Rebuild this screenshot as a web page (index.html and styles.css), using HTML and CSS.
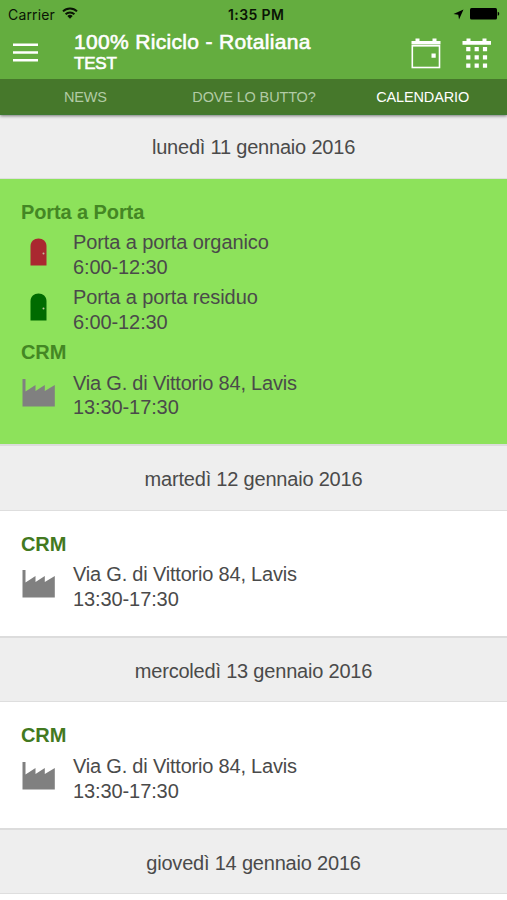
FILE: index.html
```html
<!DOCTYPE html>
<html lang="it">
<head>
<meta charset="utf-8">
<title>100% Riciclo - Rotaliana</title>
<link rel="stylesheet" href="styles.css">
</head>
<body>
<svg width="0" height="0" class="defs">
  <symbol id="factory" viewBox="0 0 33 28"><path fill="#808080" d="M.5 0h3v12.500L13.500 6v6L22.800 6v6L32.800 6v21.500H.5z"/></symbol>
  <symbol id="door" viewBox="0 0 17 28"><path fill="currentColor" d="M.5 27.500V8C.5 3.600 4 .5 8.500 .5S16.500 3.600 16.500 8v19.500z"/><circle cx="13.500" cy="15.500" r="1" fill="#c3bf9a"/></symbol>
</svg>
<header class="top">
  <div class="status">
    <span class="carrier">Carrier</span>
    <svg class="wifi" width="16" height="12" viewBox="0 0 16 12"><g fill="none" stroke="#0a1405" stroke-width="2"><path d="M1 4.400a10 10 0 0 1 14 0M3.600 7.200a6.300 6.300 0 0 1 8.800 0"/></g><path fill="#0a1405" d="M5.300 8.900a4 4 0 0 1 5.400 0L8 11.700z"/></svg>
    <span class="clock">1:35 PM</span>
    <svg class="loc" width="11" height="11" viewBox="0 0 11 11"><path d="M10.500 .5L6 10.500 5.300 5.700.5 5z"/></svg>
    <svg class="battery" width="30" height="12" viewBox="0 0 30 12"><rect width="27" height="11.500" rx="1.500"/><path d="M27.700 3.800c2 .5 2 3.500 0 4z"/></svg>
  </div>
  <div class="toolbar">
    <svg class="menu" width="25" height="19" viewBox="0 0 25 19"><path stroke="#fff" stroke-width="2.500" d="M0 1.700h25M0 9.500h25M0 17.200h25"/></svg>
    <div class="titles"><div class="title">100% Riciclo - Rotaliana</div><div class="subtitle">TEST</div></div>
    <svg class="cal" width="30" height="31" viewBox="0 0 30 31"><path fill="#fff" d="M.5 3h4V.5h4V3h13V.5h4V3h4v3.500H.5zM20.500 15.500h4.200v4.200h-4.200z"/><rect x="1.300" y="7.800" width="27.200" height="21.700" fill="none" stroke="#fff" stroke-width="1.600"/></svg>
    <svg class="grid" width="30" height="31" viewBox="0 0 30 31"><path fill="#fff" d="M.5 3h4V.5h4V3h12V.5h4V3H29v3.800H.5zM4.200 9h4.200v4.200H4.200zm8.400 0h4.200v4.200h-4.200zm8.300 0h4.200v4.200h-4.200zM4.200 17.300h4.200v4.200H4.200zm8.400 0h4.200v4.200h-4.200zm8.300 0h4.200v4.200h-4.200zM4.200 25.500h4.200v4.200H4.200zm8.400 0h4.200v4.200h-4.200zm8.300 0h4.200v4.200h-4.200z"/></svg>
  </div>
  <nav class="tabs"><span>NEWS</span><span>DOVE LO BUTTO?</span><span class="active">CALENDARIO</span></nav>
</header>
<main>
  <h2 class="day first">lunedì 11 gennaio 2016</h2>
  <section class="card today">
    <h3>Porta a Porta</h3>
    <div class="item"><svg class="icon red" width="34" height="28"><use href="#door"/></svg><p>Porta a porta organico<br>6:00-12:30</p></div>
    <div class="item"><svg class="icon green" width="34" height="28"><use href="#door"/></svg><p>Porta a porta residuo<br>6:00-12:30</p></div>
    <h3>CRM</h3>
    <div class="item site"><svg class="icon" width="34" height="28"><use href="#factory"/></svg><p><span class="place">Via G. di Vittorio 84, Lavis</span><br>13:30-17:30</p></div>
  </section>
  <h2 class="day">martedì 12 gennaio 2016</h2>
  <section class="card">
    <h3>CRM</h3>
    <div class="item site"><svg class="icon" width="34" height="28"><use href="#factory"/></svg><p><span class="place">Via G. di Vittorio 84, Lavis</span><br>13:30-17:30</p></div>
  </section>
  <h2 class="day">mercoledì 13 gennaio 2016</h2>
  <section class="card">
    <h3>CRM</h3>
    <div class="item site"><svg class="icon" width="34" height="28"><use href="#factory"/></svg><p><span class="place">Via G. di Vittorio 84, Lavis</span><br>13:30-17:30</p></div>
  </section>
  <h2 class="day">giovedì 14 gennaio 2016</h2>
</main>
</body>
</html>
```
FILE: styles.css
```css
* { box-sizing: border-box; }
html { overflow: hidden; }
body { margin: 0; height: 900px; overflow: hidden; background: #fff; color: #4a4a4a; font-family: "Liberation Sans", Arial, sans-serif; font-size: 20px; }
svg { display: block; flex: none; }
h2, h3, p { margin: 0; }
.defs { position: absolute; }
.top { position: relative; z-index: 1; height: 115px; background: #64ad3f; box-shadow: 0 1px 3px rgba(0,0,0,.5); }
.status { display: grid; grid-template-columns: 47px 1fr 58px 1fr 11px 30px; align-items: center; height: 28px; padding: 0 7px 0 8px; color: #0a1405; font-family: Inter, sans-serif; font-size: 14px; white-space: nowrap; }
.carrier { letter-spacing: .15px; }
.wifi { margin-left: 7px; margin-top: -2px; }
.clock { font-weight: 600; letter-spacing: .4px; }
.loc { grid-column: 5; margin-left: -6px; }
.toolbar { display: flex; height: 51px; padding-left: 13px; color: #fff; }
.menu { margin-top: 15px; }
.titles { width: 337px; padding: 3px 0 0 36px; -webkit-text-stroke: .6px #fff; white-space: nowrap; }
.title { font-size: 21px; line-height: 22px; letter-spacing: .33px; }
.subtitle { font-size: 17px; line-height: 21px; letter-spacing: -.2px; }
.cal { margin: 9.500px 0 0 36px; }
.grid { margin: 9.500px 0 0 21px; }
.tabs { display: grid; grid-template-columns: repeat(3, 1fr); height: 36px; padding-left: 1px; background: #46782b; border-bottom: 1px solid #3f7a32; color: #b2cba5; font-size: 14.500px; line-height: 37px; letter-spacing: -.15px; text-align: center; }
.tabs .active { color: #fff; }
.day { height: 66.500px; background: #eee; border-top: 2px solid #dcdcdc; border-bottom: 1px solid #dedede; font-size: 20px; font-weight: 400; line-height: 66px; letter-spacing: -.2px; text-align: center; }
.day.first { height: 64px; border-top: 0; line-height: 64px; }
.card { height: 125.300px; padding: 20px 21px 0; background: #fff; }
.card.today { height: 265.200px; background: #8de25b; }
h3 { height: 31px; color: #43791f; font-size: 20px; line-height: 26px; letter-spacing: -.1px; }
.today h3 { color: #448724; }
.item { display: flex; height: 55px; }
.item + h3 { height: 31px; margin-top: -1px; }
.site { padding-top: .6px; }
.item p { margin-left: 18px; line-height: 24.500px; letter-spacing: -.1px; white-space: nowrap; }
.place { letter-spacing: -.2px; }
.icon { width: 33px; margin: 8px 0 0 1px; }
.red { color: #aa2830; }
.green { color: #006b00; }
```
